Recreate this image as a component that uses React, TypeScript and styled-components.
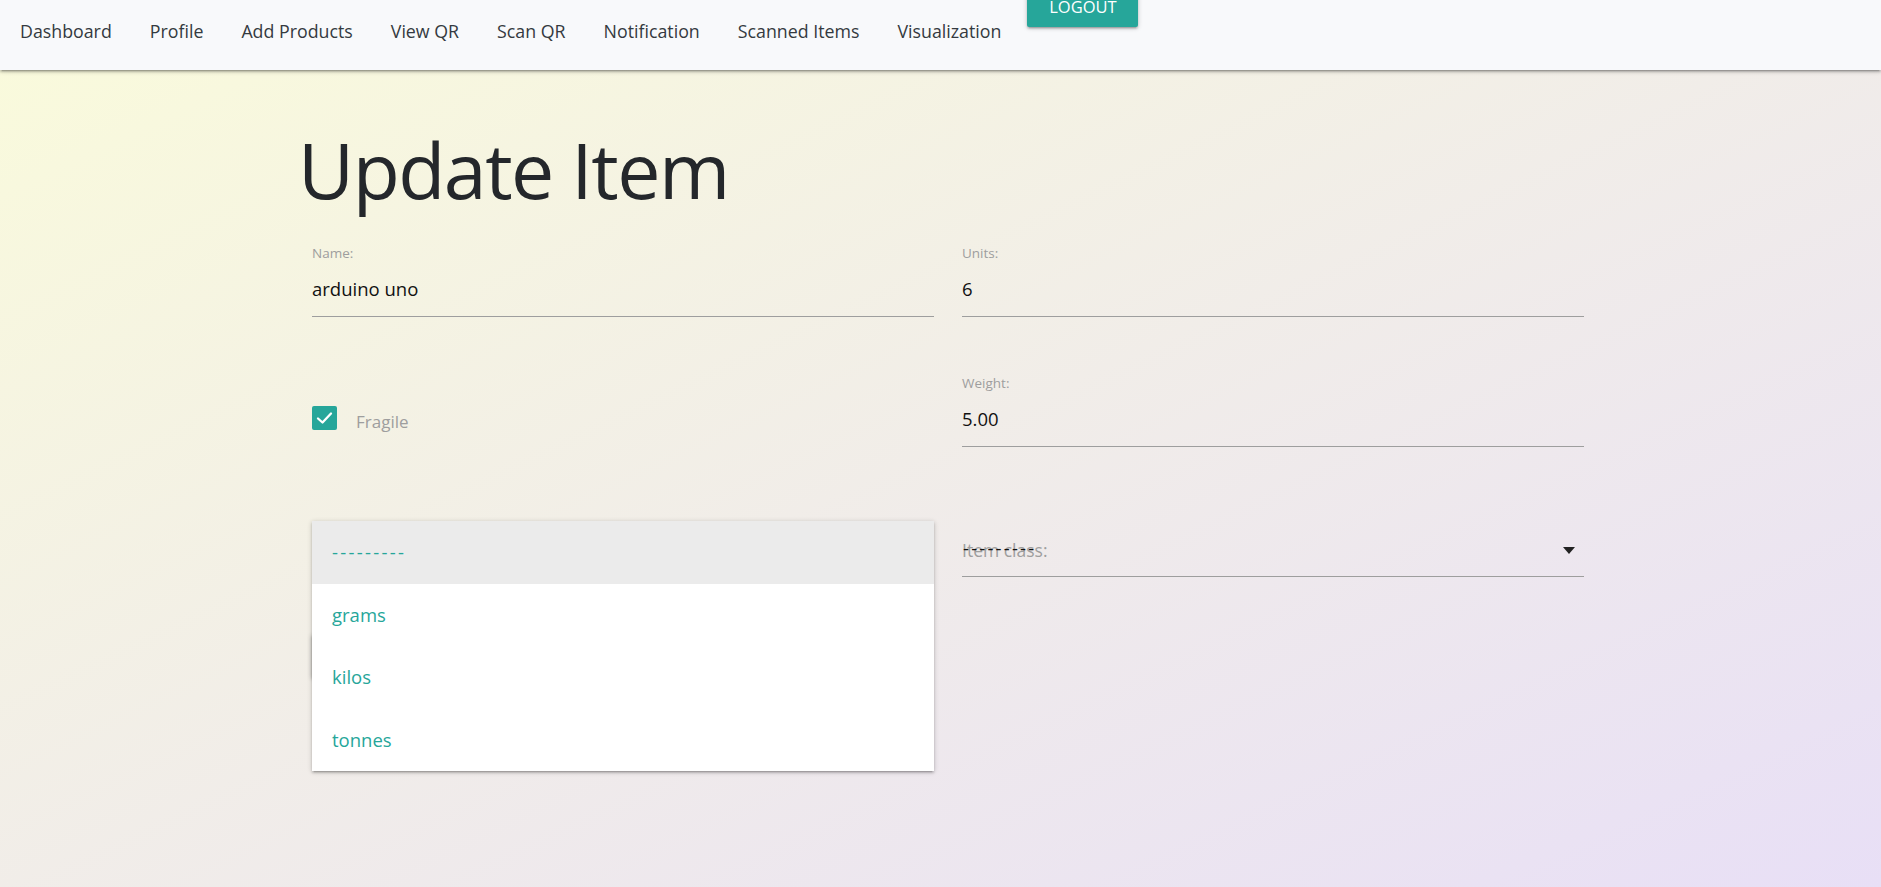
import React from "react";
import styled, { createGlobalStyle } from "styled-components";

const GlobalStyle = createGlobalStyle`
  html, body, #root { margin: 0; padding: 0; height: 100%; }
  body { font-family: "Open Sans", "Noto Sans", Arial, sans-serif; }
  * { box-sizing: border-box; }
`;

const TEAL = "#26a69a";
const FONT = `"Open Sans", "Noto Sans", Arial, sans-serif`;

const Page = styled.div`
  min-height: 100vh;
  background: linear-gradient(to bottom right, #fafbdb 0%, #e8dff6 100%);
  font-family: ${FONT};
  overflow: hidden;
`;

const NavBar = styled.nav`
  position: relative;
  z-index: 5;
  height: 70px;
  background: #f8f9fb;
  display: flex;
  align-items: flex-start;
  padding-left: 1px;
  box-shadow: 0 2px 2px 0 rgba(0, 0, 0, 0.16), 0 3px 1px -2px rgba(0, 0, 0, 0.14),
    0 1px 5px 0 rgba(0, 0, 0, 0.22);
`;

const NavLink = styled.a`
  display: block;
  line-height: 62px;
  padding: 0 19px;
  font-size: 17.8px;
  color: #343a40;
  text-decoration: none;
  white-space: nowrap;
  cursor: pointer;
`;

const LogoutButton = styled.button`
  margin-top: -13px;
  margin-left: 7px;
  height: 40px;
  width: 111px;
  border: none;
  border-radius: 2px;
  background: ${TEAL};
  color: #fff;
  font-family: ${FONT};
  font-size: 16.5px;
  text-transform: uppercase;
  line-height: 40px;
  padding: 0;
  box-shadow: 0 2px 2px 0 rgba(0, 0, 0, 0.14), 0 3px 1px -2px rgba(0, 0, 0, 0.12),
    0 1px 5px 0 rgba(0, 0, 0, 0.2);
  cursor: pointer;
`;

const Main = styled.main`
  padding-top: 55px;
  padding-left: 298px;
  padding-bottom: 40px;
`;

const Title = styled.h1`
  margin: 0;
  font-size: 77px;
  line-height: 90px;
  font-weight: 400;
  letter-spacing: -1.5px;
  color: #24272b;
`;

const FormGrid = styled.form`
  margin-top: 29px;
  margin-left: 14px;
  display: grid;
  grid-template-columns: 622px 622px;
  column-gap: 28px;
  row-gap: 57px;
`;

const FieldBox = styled.div`
  position: relative;
  display: flex;
  flex-direction: column;
`;

const Label = styled.label`
  display: block;
  height: 18px;
  font-size: 13.5px;
  line-height: 18px;
  color: #9e9e9e;
`;

const ValueLine = styled.div`
  position: relative;
  height: 55px;
  line-height: 54px;
  font-size: 18.5px;
  color: #111;
  border-bottom: 1px solid #9e9e9e;
`;

const CheckRow = styled.div`
  height: 55px;
  display: flex;
  align-items: center;
  gap: 19px;
`;

const CheckBox = styled.span`
  width: 25px;
  height: 24px;
  margin-bottom: 4px;
  border-radius: 2px;
  background: ${TEAL};
  display: flex;
  align-items: center;
  justify-content: center;
`;

const CheckText = styled.span`
  font-size: 17px;
  color: #9e9e9e;
  margin-top: 3px;
`;

const Placeholder = styled.span`
  position: absolute;
  left: 0;
  top: 1px;
  font-size: 17.5px;
  color: #9e9e9e;
`;

const Dashes = styled.span`
  font-size: 18.5px;
  letter-spacing: 2.3px;
  color: ${TEAL};
`;

const OverDashes = styled.span`
  position: absolute;
  left: 1px;
  top: -1px;
  font-size: 18.5px;
  letter-spacing: 2.2px;
  color: #111;
`;

const Caret = styled.svg`
  position: absolute;
  right: 9px;
  top: 25px;
`;

const Dropdown = styled.ul`
  position: absolute;
  z-index: 10;
  top: 17px;
  left: 0;
  width: 100%;
  margin: 0;
  padding: 0;
  list-style: none;
  background: #fff;
  box-shadow: 0 2px 2px 0 rgba(0, 0, 0, 0.14), 0 3px 1px -2px rgba(0, 0, 0, 0.12),
    0 1px 5px 0 rgba(0, 0, 0, 0.2);
`;

const Option = styled.li<{ $active?: boolean }>`
  height: 62.5px;
  line-height: 62px;
  padding: 0 20px;
  font-size: 18.5px;
  color: ${TEAL};
  background: ${(p) => (p.$active ? "#ebebeb" : "#fff")};
`;

const SubmitButton = styled.button`
  display: block;
  margin-top: 57px;
  margin-left: 14px;
  height: 44px;
  width: 130px;
  border: none;
  border-radius: 2px;
  background: #4a4a4a;
  color: #fff;
  font-family: ${FONT};
  font-size: 16px;
  box-shadow: 0 2px 2px 0 rgba(0, 0, 0, 0.14), 0 3px 1px -2px rgba(0, 0, 0, 0.12),
    0 1px 5px 0 rgba(0, 0, 0, 0.3);
`;

const navItems = [
  "Dashboard",
  "Profile",
  "Add Products",
  "View QR",
  "Scan QR",
  "Notification",
  "Scanned Items",
  "Visualization",
];

const Field: React.FC<{ label: string; value: string }> = ({ label, value }) => (
  <FieldBox>
    <Label>{label}</Label>
    <ValueLine>{value}</ValueLine>
  </FieldBox>
);

export default function App() {
  return (
    <Page>
      <GlobalStyle />
      <NavBar>
        {navItems.map((n) => (
          <NavLink key={n}>{n}</NavLink>
        ))}
        <LogoutButton>Logout</LogoutButton>
      </NavBar>
      <Main>
        <Title>Update Item</Title>
        <FormGrid onSubmit={(e) => e.preventDefault()}>
          <Field label="Name:" value="arduino uno" />
          <Field label="Units:" value="6" />
          <FieldBox>
            <Label as="div" />
            <CheckRow>
              <CheckBox>
                <svg width="17" height="14" viewBox="0 0 17 14">
                  <polyline
                    points="2,7.5 6.5,11.5 15,2.5"
                    fill="none"
                    stroke="#fff"
                    strokeWidth="2.3"
                    strokeLinecap="round"
                    strokeLinejoin="round"
                  />
                </svg>
              </CheckBox>
              <CheckText>Fragile</CheckText>
            </CheckRow>
          </FieldBox>
          <Field label="Weight:" value="5.00" />
          <FieldBox>
            <Label as="div" />
            <ValueLine />
            <Dropdown>
              <Option $active>
                <Dashes>---------</Dashes>
              </Option>
              <Option>grams</Option>
              <Option>kilos</Option>
              <Option>tonnes</Option>
            </Dropdown>
          </FieldBox>
          <FieldBox>
            <Label as="div" />
            <ValueLine>
              <Placeholder>Item class:</Placeholder>
              <OverDashes>---------</OverDashes>
              <Caret width="12" height="7" viewBox="0 0 12 7">
                <polygon points="0,0 12,0 6,7" fill="#222" />
              </Caret>
            </ValueLine>
          </FieldBox>
        </FormGrid>
        <SubmitButton type="button" aria-hidden="true" />
      </Main>
    </Page>
  );
}
